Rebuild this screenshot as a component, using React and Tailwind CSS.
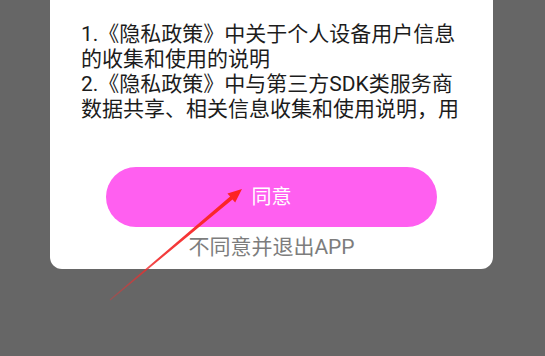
import React from "react";

const items = [
  "1.《隐私政策》中关于个人设备用户信息的收集和使用的说明",
  "2.《隐私政策》中与第三方SDK类服务商数据共享、相关信息收集和使用说明，用",
];

const Arrow = () => (
  <svg className="absolute left-0 top-0 pointer-events-none" width="545" height="356" viewBox="0 0 545 356">
    <defs>
      <linearGradient id="arrowFade" x1="110" y1="300" x2="242" y2="189" gradientUnits="userSpaceOnUse">
        <stop offset="0" stopColor="#f03030" stopOpacity="0.35" />
        <stop offset="0.35" stopColor="#f02a2a" stopOpacity="0.9" />
        <stop offset="1" stopColor="#ff2222" stopOpacity="1" />
      </linearGradient>
    </defs>
    <polygon
      points="109.7,299.6 230.1,196.6 227.4,193.4 242,189 235.2,202.6 232.5,199.4 110.3,300.4"
      fill="url(#arrowFade)"
    />
  </svg>
);

export default function App() {
  return (
    <div
      className="relative w-[545px] h-[356px] overflow-hidden bg-[#666666]"
      style={{ fontFamily: 'Roboto, "Noto Sans CJK SC", sans-serif' }}
    >
      {/* Dialog card, top is scrolled off */}
      <div className="ml-[50px] w-[443px] h-[269px] bg-white rounded-b-[12px] pt-[22px] pl-[31px] flex flex-col">
        <div className="w-[385px] h-[100px] text-[21px] leading-[25px] text-[#1c1c1c]">
          {items.map((t) => (
            <p key={t}>{t}</p>
          ))}
        </div>

        <div className="-ml-[31px] mt-[45px] flex flex-col items-center">
          <button className="w-[331px] h-[60px] rounded-full bg-[#ff5ff0] text-white text-[20px] leading-[24px]">
            同意
          </button>
          <div className="mt-[8px] text-[21px] leading-[24px] text-[#7d7d7d]">不同意并退出APP</div>
        </div>
      </div>

      <Arrow />
    </div>
  );
}
